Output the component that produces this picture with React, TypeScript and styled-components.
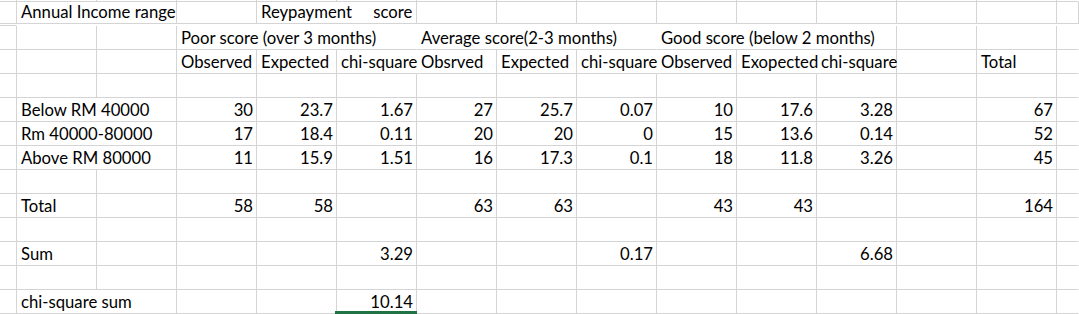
import React from "react";
import styled, { createGlobalStyle } from "styled-components";

const GlobalStyle = createGlobalStyle`
  html, body {
    margin: 0;
    padding: 0;
    background: #ffffff;
  }
  body {
    font-family: Lato, "Liberation Sans", sans-serif;
    color: #000000;
  }
`;

const Sheet = styled.div`
  display: flex;
  flex-direction: column;
  width: 1079px;
  height: 314px;
  overflow: hidden;
  background: #ffffff;
`;

const Row = styled.div<{ $height: number }>`
  display: grid;
  grid-template-columns: 17px repeat(13, 80px) 1fr;
  height: ${(p) => p.$height}px;
  flex-shrink: 0;
`;

const Cell = styled.div<{ $span: number; $align: "left" | "right"; $open: boolean; $selected: boolean }>`
  position: relative;
  grid-column: span ${(p) => p.$span};
  box-sizing: border-box;
  border-bottom: 1px solid #d4d4d4;
  border-right: 1px solid ${(p) => (p.$open ? "transparent" : "#d4d4d4")};
  display: flex;
  align-items: flex-end;
  justify-content: ${(p) => (p.$align === "right" ? "flex-end" : "flex-start")};
  padding: 0 3px 1px 4px;
  font-size: 16.7px;
  line-height: 20px;
  white-space: pre;
  overflow: visible;

  &::after {
    content: "";
    display: ${(p) => (p.$selected ? "block" : "none")};
    position: absolute;
    left: -2px;
    right: -1px;
    bottom: -1px;
    height: 3px;
    background: #217346;
  }
`;

type CellSpec = {
  text?: string;
  span?: number;
  right?: boolean;
  open?: boolean;
  selected?: boolean;
};

type RowSpec = CellSpec[];

const n = (text: string): CellSpec => ({ text, right: true });
const e: CellSpec = {};
const blank: RowSpec = Array.from({ length: 13 }, () => e);

// columns B..N, 13 cells per row (spans count as several)
const rows: RowSpec[] = [
  [{ text: "Annual Income range", span: 2 }, e, { text: "Reypayment     score", span: 2 }, e, e, e, e, e, e, e, e, e],
  [
    e,
    e,
    { text: "Poor score (over 3 months)", span: 3, open: true },
    { text: "Average score(2-3 months)", span: 3, open: true },
    { text: "Good score (below 2 months)", span: 3 },
    e,
    e,
  ],
  [
    e,
    e,
    { text: "Observed" },
    { text: "Expected" },
    { text: "chi-square", open: true },
    { text: "Obsrved" },
    { text: "Expected" },
    { text: "chi-square", open: true },
    { text: "Observed" },
    { text: "Exopected", open: true },
    { text: "chi-square" },
    e,
    { text: "Total" },
  ],
  blank,
  [{ text: "Below RM 40000", span: 2 }, n("30"), n("23.7"), n("1.67"), n("27"), n("25.7"), n("0.07"), n("10"), n("17.6"), n("3.28"), e, n("67")],
  [{ text: "Rm 40000-80000", span: 2 }, n("17"), n("18.4"), n("0.11"), n("20"), n("20"), n("0"), n("15"), n("13.6"), n("0.14"), e, n("52")],
  [{ text: "Above RM 80000", span: 2 }, n("11"), n("15.9"), n("1.51"), n("16"), n("17.3"), n("0.1"), n("18"), n("11.8"), n("3.26"), e, n("45")],
  blank,
  [{ text: "Total" }, e, n("58"), n("58"), e, n("63"), n("63"), e, n("43"), n("43"), e, e, n("164")],
  blank,
  [{ text: "Sum" }, e, e, e, n("3.29"), e, e, n("0.17"), e, e, n("6.68"), e, e],
  blank,
  [{ text: "chi-square sum", span: 2 }, e, e, { text: "10.14", right: true, selected: true }, e, e, e, e, e, e, e, e],
];

const SheetRow = ({ cells, height }: { cells: RowSpec; height: number }) => (
  <Row $height={height}>
    <Cell $span={1} $align="left" $open={false} $selected={false} />
    {cells.map((c, i) => (
      <Cell
        key={i}
        $span={c.span ?? 1}
        $align={c.right ? "right" : "left"}
        $open={!!c.open}
        $selected={!!c.selected}
      >
        {c.text}
      </Cell>
    ))}
    <Cell $span={1} $align="left" $open={true} $selected={false} />
  </Row>
);

export default function App() {
  return (
    <>
      <GlobalStyle />
      <Sheet>
        <SheetRow cells={blank} height={2} />
        {rows.map((r, i) => (
          <SheetRow key={i} cells={r} height={24} />
        ))}
      </Sheet>
    </>
  );
}
